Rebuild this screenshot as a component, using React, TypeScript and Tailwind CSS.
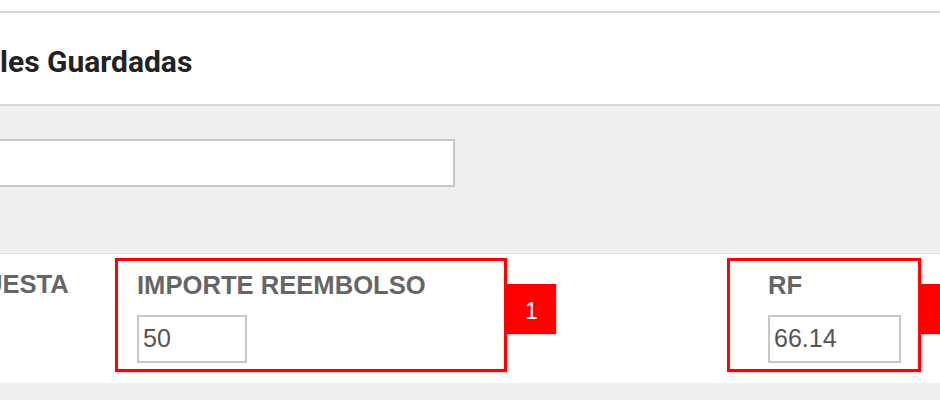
import React from "react";

function Field({ label, value, inputWidth, padLeft }: { label: string; value: string; inputWidth: string; padLeft: string }) {
  return (
    <div className={`flex flex-col pt-[12px] pb-[6px] ${padLeft}`}>
      <span className="text-[25.6px] leading-none font-bold text-[#666666]">{label}</span>
      <div
        className={`mt-[16px] flex h-[48px] ${inputWidth} items-center border-2 border-[#c8c8c8] bg-white pl-[4px] text-[25px] text-[#555555]`}
      >
        {value}
      </div>
    </div>
  );
}

function Badge({ n }: { n: string }) {
  return (
    <div className="mt-[30px] flex h-[50px] w-[49px] shrink-0 items-center justify-center bg-[#ff0000] pt-[4px] text-[23px] font-light text-white shadow-[1px_1px_2px_rgba(0,0,0,0.25)]">
      {n}
    </div>
  );
}

export default function App() {
  return (
    <div className="h-[400px] w-[940px] overflow-hidden bg-[#eef0f0] font-['Liberation_Sans',Arial,sans-serif]">
      <div className="h-[11px] bg-white" />
      <header className="h-[95px] border-y-2 border-[#d8d8d8] bg-white pt-[26px]">
        <h1 className="font-['Roboto',sans-serif] text-[30px] font-bold text-[#222222]">les Guardadas</h1>
      </header>

      <section className="h-[147px] pt-[33px]">
        <div className="h-[48px] w-[455px] border-2 border-l-0 border-[#c8c8c8] bg-white" />
      </section>

      <div className="flex h-[130px] items-start border-t border-[#e2e4e4] bg-white">
        <div className="w-[115px] shrink-0 pt-[18px]">
          <span className="-ml-[16px] text-[25.6px] leading-none font-bold text-[#666666]">UESTA</span>
        </div>
        <div className="mt-[4px] w-[392px] shrink-0 border-[3px] border-[#ff0000] shadow-[1px_1px_2px_rgba(0,0,0,0.25)]">
          <Field label="IMPORTE REEMBOLSO" value="50" inputWidth="w-[110px]" padLeft="pl-[19px]" />
        </div>
        <Badge n="1" />
        <div className="w-[171px] shrink-0" />
        <div className="mt-[4px] w-[194px] shrink-0 border-[3px] border-[#ff0000] shadow-[1px_1px_2px_rgba(0,0,0,0.25)]">
          <Field label="RF" value="66.14" inputWidth="w-[133px]" padLeft="pl-[38px]" />
        </div>
        <Badge n="2" />
      </div>
    </div>
  );
}
